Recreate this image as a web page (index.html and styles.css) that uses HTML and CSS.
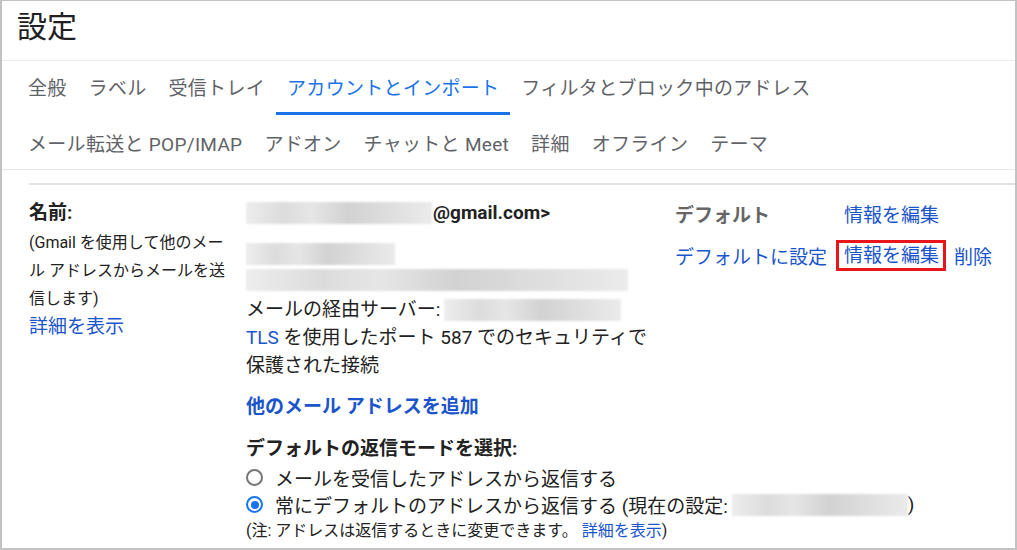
FILE: index.html
```html
<!DOCTYPE html>
<html lang="ja">
<head>
<meta charset="utf-8">
<title>設定</title>
<link rel="stylesheet" href="styles.css">
</head>
<body>
<div class="frame">
  <header class="head">設定</header>
  <nav class="tabs">
    <div class="tabrow">
      <span class="tab">全般</span>
      <span class="tab">ラベル</span>
      <span class="tab">受信トレイ</span>
      <span class="tab active">アカウントとインポート</span>
      <span class="tab">フィルタとブロック中のアドレス</span>
    </div>
    <div class="tabrow second">
      <span class="tab">メール転送と POP/IMAP</span>
      <span class="tab">アドオン</span>
      <span class="tab">チャットと Meet</span>
      <span class="tab">詳細</span>
      <span class="tab">オフライン</span>
      <span class="tab">テーマ</span>
    </div>
  </nav>
  <section class="content">
    <div class="label-col">
      <div class="label-title">名前:</div>
      <div class="label-desc">(Gmail を使用して他のメール アドレスからメールを送信します)</div>
      <a class="link">詳細を表示</a>
    </div>
    <div class="mid-col">
      <div class="name-line"><span class="blur b-name"></span><b>@gmail.com&gt;</b></div>
      <div class="addr">
        <div class="bline"><span class="blur b-a1"></span></div>
        <div class="bline"><span class="blur b-a2"></span></div>
        <div class="line">メールの経由サーバー: <span class="blur b-srv"></span></div>
        <div class="tls"><a class="link">TLS</a> を使用したポート 587 でのセキュリティで保護された接続</div>
      </div>
    </div>
    <div class="act-col">
      <div class="act-grid">
        <span class="def">デフォルト</span>
        <a class="link edit">情報を編集</a>
        <span></span>
        <a class="link">デフォルトに設定</a>
        <a class="link edit boxed">情報を編集</a>
        <a class="link del">削除</a>
      </div>
    </div>
    <div class="lower">
      <a class="link add">他のメール アドレスを追加</a>
      <div class="reply-title">デフォルトの返信モードを選択:</div>
      <div class="radio-row first"><span class="radio"></span>メールを受信したアドレスから返信する</div>
      <div class="radio-row"><span class="radio on"></span>常にデフォルトのアドレスから返信する (現在の設定: <span class="blur b-cur"></span>)</div>
      <div class="note">(注: アドレスは返信するときに変更できます。 <a class="link">詳細を表示</a>)</div>
    </div>
  </section>
</div>
</body>
</html>
```

FILE: styles.css
```css
* { box-sizing: border-box; }
html, body { margin: 0; padding: 0; background: #fff; }
body {
  font-family: Roboto, "Noto Sans CJK JP", sans-serif;
  color: #222;
}
.frame {
  width: 1017px;
  height: 550px;
  border-style: solid;
  border-color: #c2c2c2;
  border-width: 1px 2px 2px 2px;
  overflow: hidden;
}
.head {
  height: 60px;
  padding-left: 15px;
  font-size: 30px;
  line-height: 52px;
  color: #202124;
  border-bottom: 1px solid #ececec;
}
.tabs {
  padding-left: 15px;
  border-bottom: 1px solid #e6e6e6;
}
.tabrow { display: flex; height: 54px; }
.tabrow.second { padding-top: 3px; }
.tab {
  display: flex;
  align-items: center;
  padding: 0 11px;
  font-size: 19px;
  letter-spacing: 0.3px;
  color: #5f6368;
  border-bottom: 3px solid transparent;
}
.tab.active { color: #1a73e8; border-bottom-color: #1a73e8; }
.content {
  margin: 13px 0 0 27px;
  border-top: 2px solid #e3e3e3;
  padding-top: 14px;
  display: grid;
  grid-template-columns: 217px 429px 1fr;
}
.link { color: #1a55cc; cursor: pointer; }
.label-title { font-size: 19px; font-weight: bold; line-height: 28px; }
.label-desc { font-size: 16px; line-height: 28px; width: 206px; margin-top: 2px; }
.label-col .link { font-size: 19px; line-height: 27px; display: block; }
.mid-col { font-size: 19px; line-height: 28px; padding-right: 14px; }
.name-line { line-height: 28px; display: flex; align-items: center; }
.name-line b { font-weight: bold; }
.addr { margin-top: 14px; }
.bline { display: flex; align-items: center; height: 26px; }
.line { display: flex; align-items: center; height: 28px; margin-top: 3px; }
.blur {
  display: inline-block;
  height: 22px;
  vertical-align: middle;
  background: linear-gradient(90deg, #ededed 0%, #dcdcdc 20%, #e6e6e6 35%, #d2d2d2 55%, #dddddd 75%, #ebebeb 100%);
  filter: blur(1px);
}
.b-name { width: 186px; margin-right: 1px; }
.b-a1 { width: 149px; }
.b-a2 { width: 382px; }
.b-srv { width: 177px; margin-left: 4px; }
.b-cur { width: 176px; margin-left: 4px; }
.act-col { font-size: 19px; }
.act-grid {
  display: grid;
  grid-template-columns: 161px auto auto;
  justify-content: start;
  grid-auto-rows: 28px;
  row-gap: 14px;
  align-items: center;
}
.def { font-weight: bold; color: #666; }
.edit { padding: 0 4px 0 8px; }
.boxed { border: 3px solid #e8151b; padding: 0 4px 0 5px; line-height: 25px; }
.del { margin-left: 8px; }
.lower { grid-column: 2 / 4; font-size: 19px; }
.add { display: block; font-weight: bold; line-height: 28px; margin-top: 13px; }
.reply-title { font-weight: bold; line-height: 28px; margin-top: 14px; }
.radio-row { display: flex; align-items: center; height: 27px; }
.radio-row.first { margin-top: 1px; }
.radio {
  width: 17px; height: 17px;
  border: 2px solid #757575;
  border-radius: 50%;
  margin-right: 12px;
  flex: none;
  position: relative;
}
.radio.on { border-color: #1a73e8; }
.radio.on::after {
  content: "";
  position: absolute;
  left: 2.5px; top: 2.5px;
  width: 8px; height: 8px;
  border-radius: 50%;
  background: #1a73e8;
}
.note { font-size: 16px; line-height: 24px; margin-top: 1px; }
```
